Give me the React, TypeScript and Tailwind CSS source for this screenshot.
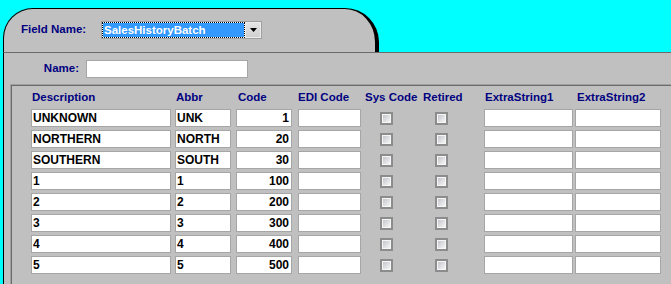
import type { ReactNode } from 'react';

const rows = [
  { desc: 'UNKNOWN', abbr: 'UNK', code: '1' },
  { desc: 'NORTHERN', abbr: 'NORTH', code: '20' },
  { desc: 'SOUTHERN', abbr: 'SOUTH', code: '30' },
  { desc: '1', abbr: '1', code: '100' },
  { desc: '2', abbr: '2', code: '200' },
  { desc: '3', abbr: '3', code: '300' },
  { desc: '4', abbr: '4', code: '400' },
  { desc: '5', abbr: '5', code: '500' },
];

const cols = 'grid grid-cols-[144px_61px_62px_63px_62px_61px_91px_86px] pl-[19px]';

function Box({ w, right, children }: { w: string; right?: boolean; children?: ReactNode }) {
  return (
    <div
      className={`${w} h-[18px] flex items-center border border-[#a6a6a6] bg-white text-[12px] leading-[16px] text-black ${
        right ? 'justify-end pr-[2px]' : 'pl-[1px]'
      }`}
    >
      {children}
    </div>
  );
}

function Check({ ml }: { ml: string }) {
  return (
    <div className={`${ml} h-[18px] flex items-center`}>
      <div className="w-[13px] h-[13px] border-2 border-[#8c8c8c] bg-[#f6f6f6] p-[1px]">
        <div className="w-full h-full bg-gradient-to-br from-[#c4c6cc] to-[#f6f6f6]" />
      </div>
    </div>
  );
}

export default function App() {
  return (
    <div className="w-[671px] h-[284px] overflow-hidden bg-[#00ffff] pt-[8px] pl-[3px] flex flex-col font-['Liberation_Sans',Arial,sans-serif] font-bold">
      {/* tab */}
      <div className="w-[376px] h-[44px] shrink-0 bg-[#c0c0c0] border-t border-l border-r-4 border-black rounded-tl-[30px] rounded-tr-[34px] flex items-start pl-[17px] pt-[12px]">
        <span className="w-[80px] h-[18px] flex items-center text-[11.5px] text-[#000080]">Field Name:</span>
        <div className="w-[161px] h-[18px] flex border border-[#a0a0a0] bg-white">
          <div className="w-[143px] h-full border border-dotted border-black bg-white">
            <div className="h-full bg-[#3399ff] pl-[1px] flex items-center text-[11.5px] leading-[14px] text-white">
              SalesHistoryBatch
            </div>
          </div>
          <div className="flex-1 h-full flex items-center justify-center border border-[#ececec] bg-gradient-to-b from-[#e6e6e6] to-[#cfcfcf]">
            <svg width="7" height="4" viewBox="0 0 7 4">
              <polygon points="0,0 7,0 3.5,4" fill="#000" />
            </svg>
          </div>
        </div>
      </div>

      {/* main panel */}
      <div className="flex-1 flex flex-col bg-[#c0c0c0] border-t border-l border-t-[#6b6b6b] border-l-black">
        <div className="flex items-center pt-[7px]">
          <span className="w-[82px] pr-[7px] text-right text-[11.5px] text-[#000080]">Name:</span>
          <div className="w-[162px] h-[18px] border border-[#a6a6a6] bg-white" />
        </div>

        <div className="mt-[6px] ml-[6px] flex-1 flex flex-col border-t border-l border-[#a0a0a0]">
          <div className="flex-1 border-t border-l border-[#6b6b6b]">
            <div className={`${cols} pt-[5px] text-[11.5px] leading-[13px] text-[#000080]`}>
              <span className="pl-[1px]">Description</span>
              <span className="pl-[1px]">Abbr</span>
              <span className="pl-[2px]">Code</span>
              <span>EDI Code</span>
              <span className="pl-[4px]">Sys Code</span>
              <span>Retired</span>
              <span className="pl-[1px]">ExtraString1</span>
              <span className="pl-[2px]">ExtraString2</span>
            </div>

            <div className="mt-[5px] flex flex-col gap-[3px]">
              {rows.map((r) => (
                <div key={r.desc} className={cols}>
                  <Box w="w-[140px]">{r.desc}</Box>
                  <Box w="w-[56px]">{r.abbr}</Box>
                  <Box w="w-[56px]" right>
                    {r.code}
                  </Box>
                  <Box w="w-[63px]" />
                  <Check ml="ml-[19px]" />
                  <Check ml="ml-[12px]" />
                  <Box w="w-[89px]" />
                  <Box w="w-[86px]" />
                </div>
              ))}
            </div>
          </div>
        </div>
      </div>
    </div>
  );
}
